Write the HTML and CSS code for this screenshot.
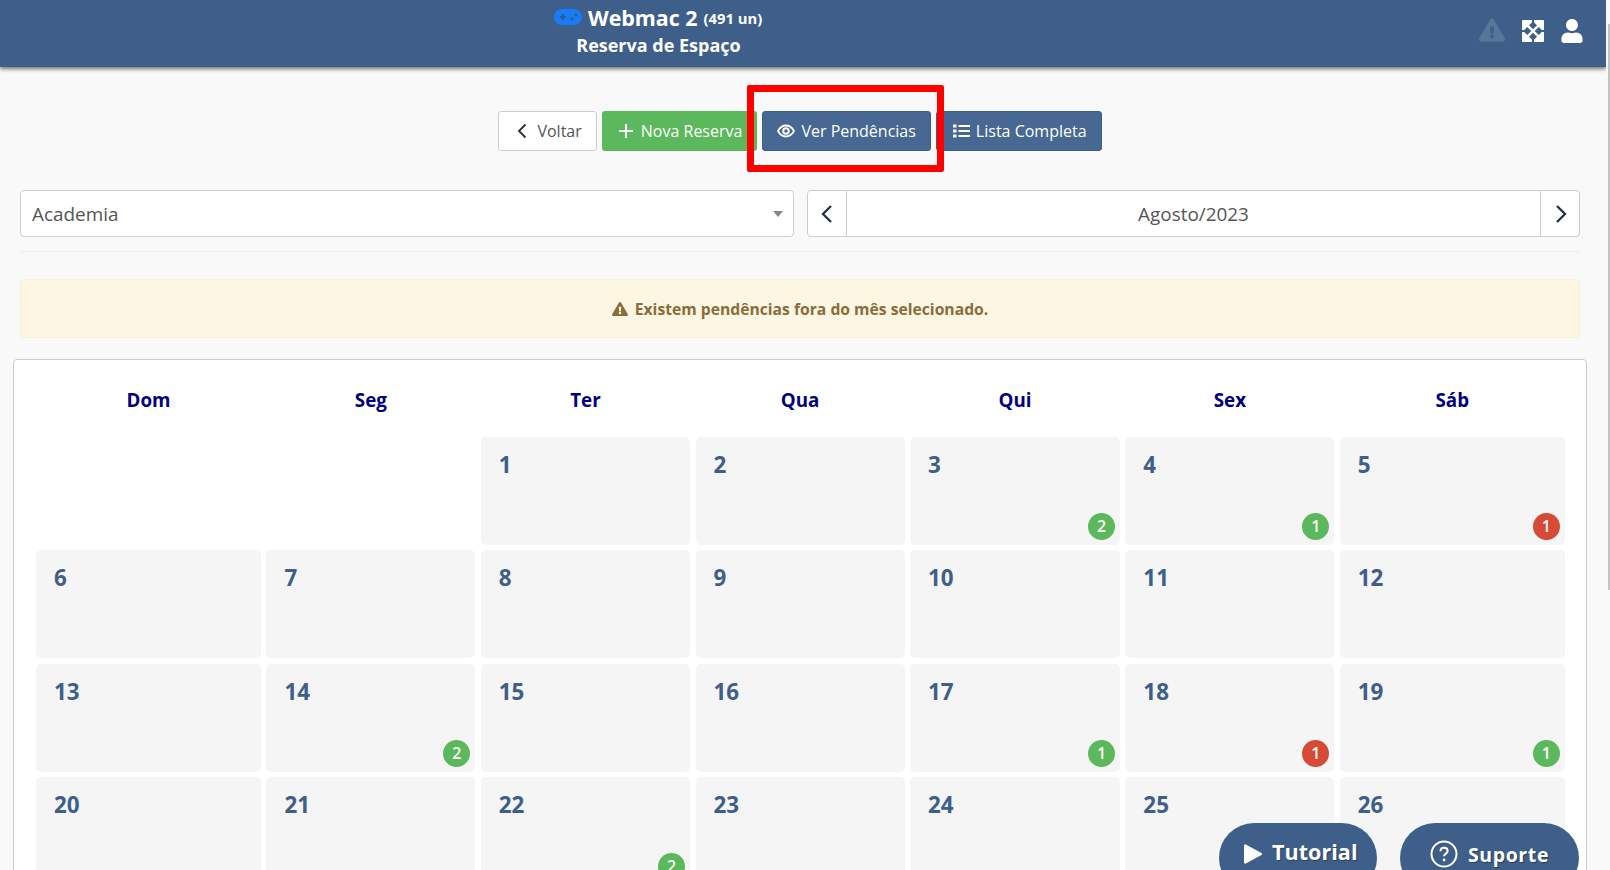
FILE: index.html
```html
<!DOCTYPE html>
<html lang="pt-BR">
<head>
<meta charset="utf-8">
<title>Reserva de Espaço</title>
<link rel="stylesheet" href="styles.css">
</head>
<body>
<div class="shell">
  <main class="main">
    <header class="topbar">
      <div class="brand">
        <div class="brand-title">
          <svg class="pad" viewBox="0 0 28 16"><rect width="28" height="16" rx="8" fill="#1a7cf5"/><path d="M6 8h6M9 5v6" stroke="#2f5a92" stroke-width="2"/><circle cx="18" cy="10" r="1.600" fill="#2f5a92"/><circle cx="22" cy="6" r="1.600" fill="#2f5a92"/></svg>
          <span class="brand-name">Webmac 2</span>
          <span class="brand-units">(491 un)</span>
        </div>
        <div class="brand-sub">Reserva de Espaço</div>
      </div>
      <div class="top-icons">
        <svg class="ic-warn" viewBox="0 0 576 512"><path fill="#587698" d="M569.517 440.013C587.975 472.007 564.806 512 527.94 512H48.054c-36.937 0-59.999-40.055-41.577-71.987L246.423 24.013c18.467-32.009 64.72-31.951 83.154 0l239.94 416zM288 354c-25.405 0-46 20.595-46 46s20.595 46 46 46 46-20.595 46-46-20.595-46-46-46zm-43.673-165.346l7.418 136c.347 6.364 5.609 11.346 11.982 11.346h48.546c6.373 0 11.635-4.982 11.982-11.346l7.418-136c.375-6.874-5.098-12.654-11.982-12.654h-63.383c-6.884 0-12.356 5.78-11.981 12.654z"/></svg>
        <svg class="ic-expand" viewBox="0 0 22 22"><rect width="22" height="22" rx="1" fill="#fff"/><path fill="#3e5f8a" d="M10 0h2v2.200l3 3.100-4 4-4-4 3-3.100zM10 22h2v-2.200l3-3.100-4-4-4 4 3 3.100zM0 10v2h2.200l3.100 3 4-4-4-4-3.100 3zM22 10v2h-2.200l-3.100 3-4-4 4-4 3.100 3z"/></svg>
        <svg class="ic-user" viewBox="0 0 448 512"><path fill="#fff" d="M224 256c70.700 0 128-57.300 128-128S294.700 0 224 0 96 57.300 96 128s57.300 128 128 128zm89.600 32h-16.700c-22.200 10.200-46.900 16-72.900 16s-50.600-5.800-72.900-16h-16.700C60.200 288 0 348.200 0 422.400V464c0 26.500 21.500 48 48 48h352c26.500 0 48-21.500 48-48v-41.600c0-74.200-60.200-134.400-134.400-134.400z"/></svg>
      </div>
    </header>

    <div class="content">
      <div class="toolbar">
        <button class="btn btn-light btn-wide"><svg class="bi" viewBox="0 0 16 16"><path d="M11.500 1.500L5 8l6.500 6.500" fill="none" stroke="#333" stroke-width="1.900"/></svg>Voltar</button>
        <button class="btn btn-green btn-wide"><svg class="bi" viewBox="0 0 16 16"><path d="M8 1v14M1 8h14" fill="none" stroke="#fff" stroke-width="2"/></svg>Nova Reserva</button>
        <span class="highlight-wrap">
          <button class="btn btn-blue"><svg class="bi bi-eye" viewBox="0 0 18 16"><path d="M1 8c2-3.600 4.800-5.500 8-5.500S15 4.400 17 8c-2 3.600-4.800 5.500-8 5.500S3 11.600 1 8z" fill="none" stroke="#fff" stroke-width="1.800"/><circle cx="9" cy="8" r="2.800" fill="none" stroke="#fff" stroke-width="2"/></svg>Ver Pendências</button>
          <span class="highlight"></span>
        </span>
        <button class="btn btn-blue btn-list"><svg class="bi bi-list" viewBox="0 0 17 16"><path d="M0 1.500h3.500v3H0zM0 6.500h3.500v3H0zM0 11.500h3.500v3H0z" fill="#fff"/><path d="M5.500 3H17M5.500 8H17M5.500 13H17" stroke="#fff" stroke-width="2"/></svg>Lista Completa</button>
      </div>

      <div class="filters">
        <div class="select"><span>Academia</span><i class="caret"></i></div>
        <div class="month">
          <button class="month-btn month-prev"><svg class="chev" viewBox="0 0 12 20"><path d="M10 2L2 10l8 8" fill="none" stroke="#22304a" stroke-width="2.300"/></svg></button>
          <div class="month-label">Agosto/2023</div>
          <button class="month-btn month-next"><svg class="chev chev-next" viewBox="0 0 12 20"><path d="M2 2l8 8-8 8" fill="none" stroke="#22304a" stroke-width="2.300"/></svg></button>
        </div>
      </div>
      <hr class="rule">

      <div class="alert">
        <svg class="alert-ic" viewBox="0 0 576 512"><path fill="#8a6d3b" d="M569.517 440.013C587.975 472.007 564.806 512 527.94 512H48.054c-36.937 0-59.999-40.055-41.577-71.987L246.423 24.013c18.467-32.009 64.72-31.951 83.154 0l239.94 416zM288 354c-25.405 0-46 20.595-46 46s20.595 46 46 46 46-20.595 46-46-20.595-46-46-46zm-43.673-165.346l7.418 136c.347 6.364 5.609 11.346 11.982 11.346h48.546c6.373 0 11.635-4.982 11.982-11.346l7.418-136c.375-6.874-5.098-12.654-11.982-12.654h-63.383c-6.884 0-12.356 5.78-11.981 12.654z"/></svg>
        Existem pendências fora do mês selecionado.
      </div>

      <section class="card">
        <div class="week"><div>Dom</div><div>Seg</div><div>Ter</div><div>Qua</div><div>Qui</div><div>Sex</div><div>Sáb</div></div>
        <div class="days">
          <div class="day-empty"></div><div class="day-empty"></div>
          <div class="day">1</div><div class="day">2</div>
          <div class="day">3<b class="badge green">2</b></div>
          <div class="day">4<b class="badge green">1</b></div>
          <div class="day">5<b class="badge red">1</b></div>
          <div class="day">6</div><div class="day">7</div><div class="day">8</div><div class="day">9</div><div class="day">10</div><div class="day">11</div><div class="day">12</div>
          <div class="day">13</div>
          <div class="day">14<b class="badge green">2</b></div>
          <div class="day">15</div><div class="day">16</div>
          <div class="day">17<b class="badge green">1</b></div>
          <div class="day">18<b class="badge red">1</b></div>
          <div class="day">19<b class="badge green">1</b></div>
          <div class="day">20</div><div class="day">21</div>
          <div class="day">22<b class="badge green">2</b></div>
          <div class="day">23</div><div class="day">24</div><div class="day">25</div><div class="day">26</div>
        </div>
      </section>
    </div>
  </main>
  <div class="scrollbar"><div class="thumb"></div></div>
</div>

<a class="float float-tutorial"><svg class="play" viewBox="0 0 18 20"><path d="M0 1.500v17a1.200 1.200 0 0 0 1.800 1l15.600-8.500a1.200 1.200 0 0 0 0-2L1.800.500A1.200 1.200 0 0 0 0 1.500z" fill="#fff"/></svg><span>Tutorial</span></a>
<a class="float float-suporte"><svg class="help" viewBox="0 0 28 28"><circle cx="14" cy="14" r="12.500" fill="none" stroke="#fff" stroke-width="2"/><path d="M10.500 11.200c0-2.200 1.600-3.400 3.600-3.400s3.500 1.200 3.500 3.100c0 2.900-3.500 2.600-3.500 5.400" fill="none" stroke="#fff" stroke-width="2"/><circle cx="14.100" cy="20" r="1.400" fill="#fff"/></svg><span>Suporte</span></a>
</body>
</html>
```

FILE: styles.css
```css
* { box-sizing: border-box; }
html, body { margin: 0; height: 870px; overflow: hidden; }
body { background: #f9f9f9; font-family: "Open Sans", "Liberation Sans", sans-serif; color: #555; position: relative; }

.shell { display: flex; height: 870px; }
.main { width: 1606px; flex: none; overflow: hidden; }
.scrollbar { width: 4px; flex: none; padding-left: 2px; padding-top: 24px; }
.thumb { height: 566px; background: #c4c4c4; }

.topbar { height: 67px; background: #3e5f8a; box-shadow: 0 2px 4px rgba(0,0,0,.55); display: flex; position: relative; z-index: 2; }
.brand { margin-left: 554px; width: 209px; color: #fff; font-weight: 700; text-align: center; padding-top: 3px; }
.brand-title { display: flex; align-items: center; height: 28px; white-space: nowrap; }
.pad { width: 28px; height: 16px; margin-right: 6px; margin-top: -1px; }
.brand-name { font-size: 21.4px; }
.brand-units { font-size: 14.8px; margin-left: 6px; margin-top: 2px; }
.brand-sub { font-size: 18px; line-height: 24px; margin-top: 2px; }

.top-icons { margin-left: auto; display: flex; align-items: flex-start; padding-right: 23px; }
.ic-warn { width: 26px; height: 26px; margin-top: 17px; margin-right: 17px; }
.ic-expand { width: 22px; height: 22px; margin-top: 20px; margin-right: 17px; }
.ic-user { width: 22px; height: 24px; margin-top: 19px; }

.content { padding: 0 26px 0 20px; }
.toolbar { display: flex; justify-content: center; gap: 5px; padding: 44px 0 0; }
.btn { height: 40px; padding: 0 14px; border-radius: 3px; border: 1px solid transparent; font: 400 16px "Open Sans", sans-serif; display: inline-flex; align-items: center; white-space: nowrap; }
.btn-wide { padding-left: 15px; }
.btn-list { padding-left: 16px; }
.bi { width: 16px; height: 16px; margin-right: 7px; flex: none; }
.bi-eye { width: 18px; margin-right: 6px; }
.bi-list { width: 17px; margin-right: 6px; }
.btn-light { background: #fff; border-color: #ccc; color: #555; }
.btn-green { background: #5cb85c; color: #fff; }
.btn-blue { background: #466892; border-color: #3e5f8a; color: #fff; }
.highlight-wrap { position: relative; display: inline-flex; }
.highlight { position: absolute; left: -15px; top: -26px; width: 197px; height: 87px; border: 7px solid #ff0000; border-radius: 2px; }

.filters { display: flex; gap: 13px; margin-top: 39px; height: 47px; }
.select { width: 774px; background: #fff; border: 1px solid #c9d0db; border-radius: 4px; display: flex; align-items: center; justify-content: space-between; padding: 0 10px 0 11px; font-size: 18.9px; color: #555; }
.caret { width: 0; height: 0; border-left: 5px solid transparent; border-right: 5px solid transparent; border-top: 6px solid #888; }
.month { flex: 1; display: flex; }
.month-btn { width: 40px; background: #fff; border: 1px solid #ccc; display: flex; align-items: center; justify-content: center; padding: 0; }
.month-prev { border-radius: 4px 0 0 4px; }
.month-next { border-radius: 0 4px 4px 0; }
.chev { width: 12px; height: 20px; }
.chev-next { margin-left: 1px; }
.month-label { flex: 1; background: #fff; border-top: 1px solid #ccc; border-bottom: 1px solid #ccc; text-align: center; font-size: 18.9px; line-height: 47px; color: #555; }
.rule { margin: 14px 0 0; border: 0; border-top: 1px solid #eee; }
.alert { margin-top: 27px; height: 59px; background: #fdf6e3; border: 1px solid #faf0d4; border-radius: 5px; display: flex; align-items: center; justify-content: center; gap: 7px; font-size: 15.7px; font-weight: 700; color: #8a6d3b; }
.alert-ic { width: 16px; height: 14px; }

.card { margin: 21px -7px 0 -7px; height: 560px; background: #fff; border: 1px solid #ccc; border-radius: 4px; padding: 0 0 0 22px; }
.week, .days { display: grid; grid-template-columns: 225px 209px 209.4px 209px 210px 209px 225px; column-gap: 5.4px; }
.week { height: 77px; align-items: center; text-align: center; font-size: 18.8px; font-weight: 700; color: #000080; padding-top: 2px; }
.days { grid-auto-rows: 108px; row-gap: 5.3px; }
.day { position: relative; background: #f5f5f5; border-radius: 5px; padding: 12px 18px; font-size: 22.4px; line-height: 32px; font-weight: 700; color: #3e5f8a; }
.badge { position: absolute; right: 5px; bottom: 5px; width: 27px; height: 27px; border-radius: 50%; color: #fff; font-size: 16px; line-height: 27px; text-align: center; font-weight: 600; }
.green { background: #5cb85c; }
.red { background: #d64a36; }

.float { position: fixed; top: 823px; height: 70px; background: #3e5f8a; color: #fff; font-weight: 700; border-radius: 35px; display: flex; align-items: flex-start; z-index: 3; text-shadow: 1px 1px 1px rgba(0,0,0,.35); }
.float-tutorial { left: 1219px; width: 158px; padding: 14px 0 0 25px; font-size: 21.6px; line-height: 30px; }
.float-suporte { left: 1400px; width: 179px; padding: 17px 0 0 30px; font-size: 19.5px; line-height: 30px; letter-spacing: .6px; }
.play { width: 18px; height: 20px; margin: 7px 10px 0 0; }
.help { width: 28px; height: 28px; margin: 0 10px 0 0; }
```
